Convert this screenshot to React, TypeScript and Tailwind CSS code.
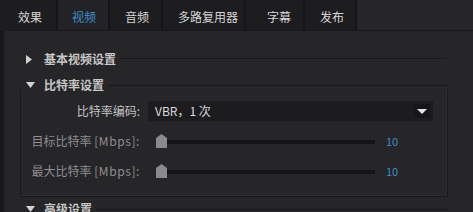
import React from "react";

const tabs = [
  { label: "效果", w: "w-[58px]", pl: "pl-[18px]" },
  { label: "视频", w: "w-[52px]", pl: "pl-[14px]", active: true },
  { label: "音频", w: "w-[53px]", pl: "pl-[15px]" },
  { label: "多路复用器", w: "w-[83px]", pl: "pl-[15px]" },
  { label: "字幕", w: "w-[59px]", pl: "pl-[21px]" },
  { label: "发布", w: "w-[52px]", pl: "pl-[15px]" },
];

function TriRight() {
  return (
    <svg width="6" height="9" viewBox="0 0 6 9" className="shrink-0">
      <path d="M0 0 L6 4.5 L0 9 Z" fill="#d2d2d2" />
    </svg>
  );
}

function TriDown() {
  return (
    <svg width="9" height="6" viewBox="0 0 9 6" className="shrink-0">
      <path d="M0 0 L9 0 L4.5 6 Z" fill="#d2d2d2" />
    </svg>
  );
}

function Thumb() {
  return (
    <svg width="11" height="14" viewBox="0 0 11 14" className="absolute left-0 top-[3px]">
      <path d="M0 4 L5.5 0 L11 4 L11 14 L0 14 Z" fill="#8a898b" />
    </svg>
  );
}

function SliderRow({ label }: { label: string }) {
  return (
    <div className="mt-[10px] flex h-[20px] items-center">
      <div className="w-[119px] shrink-0 text-right text-[#8e8d90]">
        {label} <span className="tracking-[0.6px]">[Mbps]:</span>
      </div>
      <div className="relative ml-[16px] h-[20px] w-[219px]">
        <div className="absolute left-[5px] right-0 top-[9px] h-[4px] bg-[#141316]" />
        <Thumb />
      </div>
      <div className="ml-[11px] text-[11px] text-[#3f8cc6]">10</div>
    </div>
  );
}

export default function App() {
  return (
    <div
      className="h-[212px] w-[473px] overflow-hidden bg-[#262528] text-[12px] leading-none"
      style={{ fontFamily: '"Noto Sans CJK SC", "Liberation Sans", sans-serif' }}
    >
      <div className="flex h-[31px] border-b border-[#19181b]">
        {tabs.map((t) => (
          <div
            key={t.label}
            className={`flex h-full items-center border-r-2 border-[#151417] pt-[3px] ${t.w} ${t.pl} ${
              t.active ? "bg-[#232225] text-[#3e8ecb]" : "bg-[#1d1c1f] text-[#d6d6d6]"
            }`}
          >
            {t.label}
          </div>
        ))}
        <div className="flex-1 bg-[#262528]" />
      </div>

      <div className="flex h-[181px]">
        <div className="w-[4px] shrink-0 bg-[#18171a]" />
        <div className="flex-1 pt-[18px]">
          <div className="flex h-[20px] items-center pl-[22px]">
            <TriRight />
            <span className="ml-[12px] font-bold text-[#c6c6c6]">基本视频设置</span>
            <div className="ml-[4px] mr-[26px] h-[2px] flex-1 border-t border-[#19181b] bg-[#2c2b2e]" />
          </div>

          <div className="relative z-10 mt-[6px] flex h-[20px] items-center pl-[22px]">
            <TriDown />
            <span className="ml-[9px] font-bold text-[#c6c6c6]">比特率设置</span>
            <div className="ml-[4px] mr-[25px] h-[1px] flex-1 bg-[#19181b]" />
          </div>

          <div className="ml-[16px] mr-[25px] mt-[-6px] border-x border-b border-[#19181b] pb-[15px] pt-[12px] shadow-[inset_-1px_-1px_0_#2e2d30]">
            <div className="flex h-[20px] items-center">
              <div className="w-[119px] shrink-0 text-right text-[#c2c2c2]">比特率编码:</div>
              <div className="ml-[8px] flex h-[20px] w-[285px] items-center justify-between bg-[#1c1b1e] pl-[7px] pr-[3px] text-[#dcdcdc]">
                <span>VBR，1 次</span>
                <span className="flex h-[14px] w-[16px] items-center justify-center bg-[#161518]">
                  <svg width="10" height="5" viewBox="0 0 10 5">
                    <path d="M0 0 L10 0 L5 5 Z" fill="#e6e6e6" />
                  </svg>
                </span>
              </div>
            </div>
            <SliderRow label="目标比特率" />
            <SliderRow label="最大比特率" />
          </div>

          <div className="mt-[2px] flex h-[20px] items-center pl-[22px]">
            <TriDown />
            <span className="ml-[9px] font-bold text-[#c6c6c6]">高级设置</span>
            <div className="ml-[4px] mr-[25px] h-[1px] flex-1 bg-[#19181b]" />
          </div>
        </div>
      </div>
    </div>
  );
}
